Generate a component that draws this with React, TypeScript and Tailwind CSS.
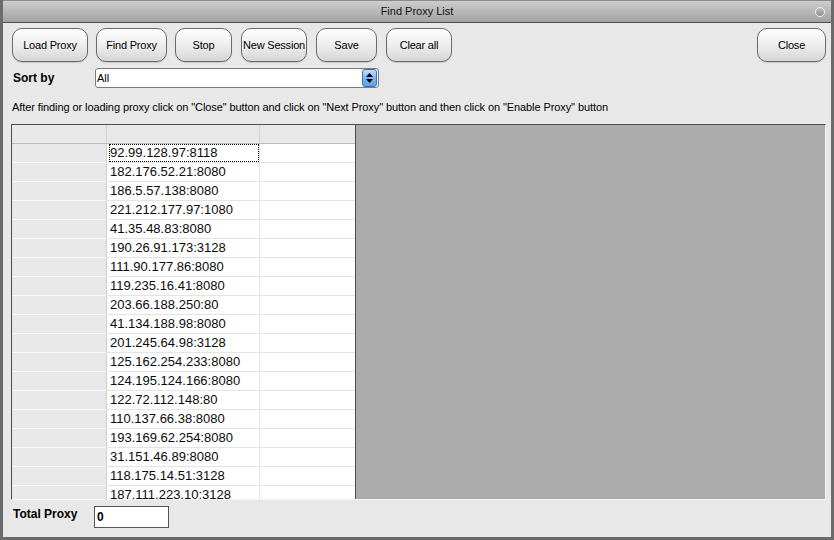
import React from 'react'

const proxies = [
  '92.99.128.97:8118',
  '182.176.52.21:8080',
  '186.5.57.138:8080',
  '221.212.177.97:1080',
  '41.35.48.83:8080',
  '190.26.91.173:3128',
  '111.90.177.86:8080',
  '119.235.16.41:8080',
  '203.66.188.250:80',
  '41.134.188.98:8080',
  '201.245.64.98:3128',
  '125.162.254.233:8080',
  '124.195.124.166:8080',
  '122.72.112.148:80',
  '110.137.66.38:8080',
  '193.169.62.254:8080',
  '31.151.46.89:8080',
  '118.175.14.51:3128',
  '187.111.223.10:3128',
]

const buttons = [
  { label: 'Load Proxy', w: 'w-[76px]', ml: 'ml-[9px]' },
  { label: 'Find Proxy', w: 'w-[71px]', ml: 'ml-[8px]' },
  { label: 'Stop', w: 'w-[57px]', ml: 'ml-[8px]' },
  { label: 'New Session', w: 'w-[66px]', ml: 'ml-[9px]' },
  { label: 'Save', w: 'w-[61px]', ml: 'ml-[9px]' },
  { label: 'Clear all', w: 'w-[66px]', ml: 'ml-[9px]' },
]

function GlossButton({ label, className }: { label: string; className: string }) {
  return (
    <button
      className={`h-[34px] px-0 whitespace-nowrap rounded-[10px] border border-[#6a6a6a] bg-gradient-to-b from-[#fdfdfd] via-[#eeeeee] to-[#d6d6d6] text-[11px] tracking-[-0.2px] text-black shadow-[inset_0_1px_0_#ffffff,0_1px_1px_rgba(0,0,0,0.15)] ${className}`}
    >
      {label}
    </button>
  )
}

export default function App() {
  return (
    <div className="w-[834px] h-[540px] flex flex-col bg-[#e8e8e8] border-x-[3px] border-b-[3px] border-[#6b6b6b] font-['Liberation_Sans',Arial,sans-serif] text-black overflow-hidden">
      {/* title bar */}
      <div className="relative h-[23px] -mx-[3px] flex items-center justify-center bg-gradient-to-b from-[#cdcdcd] to-[#a2a2a2] border-t border-[#8a8a8a] border-b border-b-[#4e4e4e]">
        <span className="text-[11px] text-[#111]">Find Proxy List</span>
        <div className="absolute right-[9px] top-[6px] w-[10px] h-[10px] rounded-full border border-[#f2f2f2] bg-gradient-to-b from-[#bdbdbd] to-[#8e8e8e]" />
      </div>

      {/* button row */}
      <div className="flex items-center mt-[5px]">
        {buttons.map(b => (
          <GlossButton key={b.label} label={b.label} className={`${b.w} ${b.ml}`} />
        ))}
        <GlossButton label="Close" className="w-[69px] ml-auto mr-[5px]" />
      </div>

      {/* sort by */}
      <div className="flex items-center mt-[6px] h-[20px]">
        <span className="ml-[10px] w-[82px] text-[12px] font-bold">Sort by</span>
        <div className="w-[284px] h-[20px] flex items-center border border-[#7a7a7a] rounded-[3px] bg-white">
          <span className="ml-[1px] text-[11px]">All</span>
          <div className="ml-auto h-[18px] w-[15px] mr-[1px] rounded-[3px] border border-[#3b6fb8] bg-gradient-to-b from-[#c4e1fb] via-[#7fb6ee] to-[#5d9fe6] flex flex-col items-center justify-center gap-[2px]">
            <svg width="7" height="4" viewBox="0 0 7 4"><path d="M0 4 L3.5 0 L7 4 Z" fill="#000" /></svg>
            <svg width="7" height="4" viewBox="0 0 7 4"><path d="M0 0 L3.5 4 L7 0 Z" fill="#000" /></svg>
          </div>
        </div>
      </div>

      {/* instruction */}
      <div className="mt-[12px] ml-[9px] text-[11px] leading-[14px] tracking-[-0.09px] whitespace-nowrap">
        After finding or loading proxy click on "Close" button and click on "Next Proxy" button and then click on "Enable Proxy" button
      </div>

      {/* grid area */}
      <div className="mt-[10px] ml-[8px] mr-[5px] h-[376px] flex border-t border-l border-[#4d4d4d] border-r border-r-[#f4f4f4] border-b border-b-[#f4f4f4] overflow-hidden">
        <div className="w-[344px] border-r border-[#4d4d4d] bg-white overflow-hidden">
          <div className="grid grid-cols-[95px_153px_95px] h-[19px] bg-[#e8e8e8] border-b border-[#bcbcbc]">
            <div className="border-r border-[#d4d4d4]" />
            <div className="border-r border-[#d4d4d4]" />
            <div />
          </div>
          {proxies.map((p, i) => (
            <div key={p} className="grid grid-cols-[95px_153px_95px] h-[19px]">
              <div className="bg-[#e8e8e8] border-r border-[#cfcfcf] border-b border-b-[#f7f7f7]" />
              <div className="border-r border-b border-[#e4e4e4] flex items-center">
                <span
                  className={`ml-[2px] h-[18px] flex items-center pl-[1px] pr-[2px] text-[13px] text-[#0a0a0a] ${i === 0 ? 'outline-1 outline-dotted outline-black -outline-offset-1 w-[150px]' : ''}`}
                >
                  {p}
                </span>
              </div>
              <div className="border-b border-[#e4e4e4]" />
            </div>
          ))}
        </div>
        <div className="flex-1 bg-[#ababab]" />
      </div>

      {/* total */}
      <div className="flex items-start mt-[6px]">
        <span className="ml-[10px] w-[81px] text-[12px] font-bold leading-[14px] mt-[1px]">Total Proxy</span>
        <div className="w-[75px] h-[22px] border border-[#555] bg-white flex items-center">
          <span className="ml-[2px] text-[12px] font-bold">0</span>
        </div>
      </div>
    </div>
  )
}
